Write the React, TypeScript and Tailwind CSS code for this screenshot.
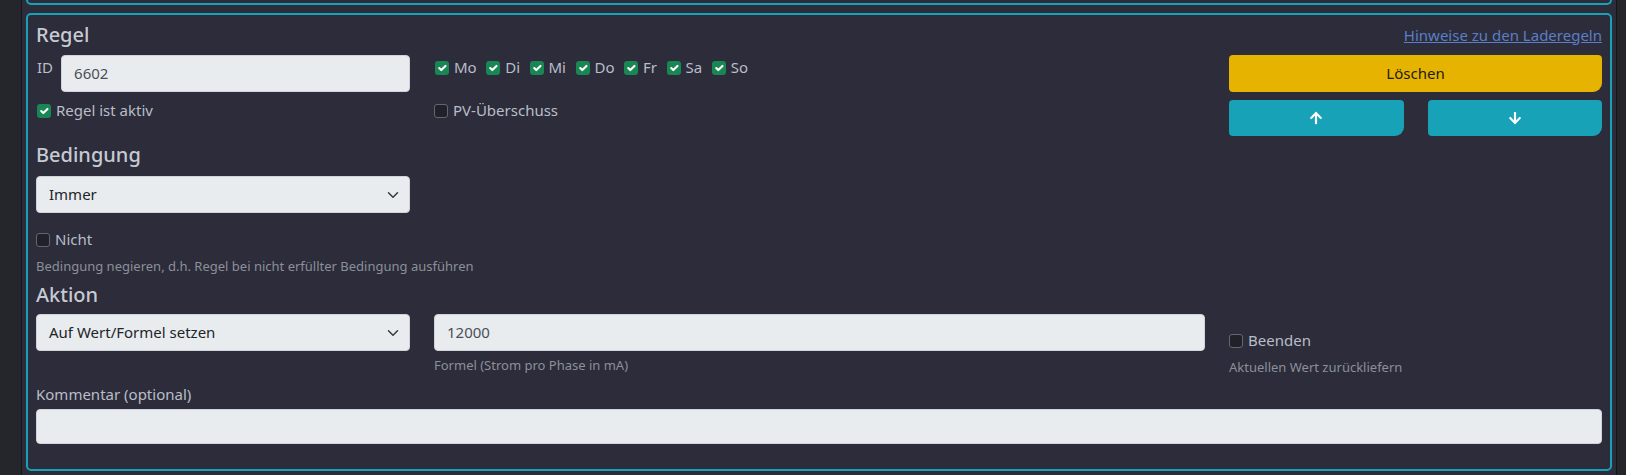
import React from "react";
import { FaArrowUp, FaArrowDown } from "react-icons/fa";

function Check({ checked }: { checked: boolean }) {
  return checked ? (
    <span className="inline-flex h-[14px] w-[14px] shrink-0 items-center justify-center rounded-[3px] bg-[#198754]">
      <svg viewBox="0 0 20 20" className="h-[14px] w-[14px]">
        <path d="m6 10 3 3 6-6" fill="none" stroke="#fff" strokeWidth="3" strokeLinecap="round" strokeLinejoin="round" />
      </svg>
    </span>
  ) : (
    <span className="inline-block h-[14px] w-[14px] shrink-0 rounded-[3px] border border-[#62666e] bg-[#212229]" />
  );
}

function CheckLine({ checked, label, className = "" }: { checked: boolean; label: string; className?: string }) {
  return (
    <div className={"flex items-center text-[15px] leading-[21px] text-[#b9bec8] " + className}>
      <Check checked={checked} />
      <span className="ml-[5px]">{label}</span>
    </div>
  );
}

function Chevron() {
  return (
    <svg viewBox="0 0 16 16" className="h-[12px] w-[12px] shrink-0">
      <path d="m2 5 6 6 6-6" fill="none" stroke="#343a40" strokeWidth="2" strokeLinecap="round" strokeLinejoin="round" />
    </svg>
  );
}

function Select({ value }: { value: string }) {
  return (
    <div className="flex h-[37px] items-center justify-between rounded-[4px] border border-[#ced4da] bg-[#e9ecef] pl-[12px] pr-[10px] text-[15px] text-[#212529]">
      <span>{value}</span>
      <Chevron />
    </div>
  );
}

const days = ["Mo", "Di", "Mi", "Do", "Fr", "Sa", "So"];

export default function App() {
  return (
    <div
      className="h-[475px] w-[1626px] overflow-hidden bg-[#25262c]"
      style={{ fontFamily: '"Noto Sans", "Open Sans", sans-serif' }}
    >
      <div className="ml-[21px] h-full w-[1596px] border-x border-[#15161a] bg-[#2c2c3a] px-[4px]">
        {/* previous card bottom */}
        <div className="h-[5px] rounded-b-[5px] border-x-2 border-b-2 border-[#17a2b8]" />

        {/* card */}
        <div className="mt-[8px] rounded-[5px] border-2 border-[#17a2b8] px-[8px] pb-[25px] pt-[8px]">
          <div className="flex items-center justify-between">
            <h5 className="text-[20px] font-medium leading-[24px] text-[#c6cad2]">Regel</h5>
            <a className="text-[15px] leading-[21px] text-[#5a7fc7] underline">Hinweise zu den Laderegeln</a>
          </div>

          {/* row 1 */}
          <div className="mt-[8px] grid grid-cols-[374px_771px_373px] gap-x-[24px]">
            <div className="flex items-start gap-[8px]">
              <span className="pl-px pt-[2px] text-[15px] leading-[21px] text-[#b9bec8]">ID</span>
              <div className="flex h-[37px] flex-1 items-center rounded-[4px] border border-[#ced4da] bg-[#e9ecef] px-[12px] text-[15px] text-[#495057]">
                6602
              </div>
            </div>
            <div className="flex items-start pl-px pt-[2px]">
              {days.map((d) => (
                <CheckLine key={d} checked label={d} className="mr-[9.5px]" />
              ))}
            </div>
            <button className="h-[37px] rounded-[4px] rounded-br-[9px] bg-[#e6b400] text-[15px] text-[#1b1b1b]">
              Löschen
            </button>
          </div>

          {/* row 2 */}
          <div className="mt-[8px] grid grid-cols-[374px_771px_373px] gap-x-[24px]">
            <CheckLine checked label="Regel ist aktiv" className="self-start pl-px" />
            <CheckLine checked={false} label="PV-Überschuss" className="self-start" />
            <div className="grid grid-cols-2 gap-x-[24px]">
              <button className="flex h-[36px] items-center justify-center rounded-[4px] rounded-br-[9px] bg-[#17a2b8] text-white">
                <FaArrowUp size={14} />
              </button>
              <button className="flex h-[36px] items-center justify-center rounded-[4px] rounded-br-[9px] bg-[#17a2b8] text-white">
                <FaArrowDown size={14} />
              </button>
            </div>
          </div>

          {/* Bedingung */}
          <h5 className="mt-[7px] text-[20px] font-medium leading-[24px] text-[#c6cad2]">Bedingung</h5>
          <div className="mt-[9px] w-[374px]">
            <Select value="Immer" />
          </div>
          <CheckLine checked={false} label="Nicht" className="mt-[16px]" />
          <p className="mt-[7px] text-[13px] leading-[18px] text-[#8b9099]">
            Bedingung negieren, d.h. Regel bei nicht erfüllter Bedingung ausführen
          </p>

          {/* Aktion */}
          <h5 className="mt-[8px] text-[20px] font-medium leading-[24px] text-[#c6cad2]">Aktion</h5>
          <div className="mt-[7px] grid grid-cols-[374px_771px_373px] gap-x-[24px]">
            <div>
              <Select value="Auf Wert/Formel setzen" />
            </div>
            <div>
              <div className="flex h-[37px] items-center rounded-[4px] border border-[#ced4da] bg-[#e9ecef] px-[12px] text-[15px] text-[#495057]">
                12000
              </div>
              <p className="mt-[5px] text-[13px] leading-[18px] text-[#8b9099]">Formel (Strom pro Phase in mA)</p>
            </div>
            <div className="pt-[16px]">
              <CheckLine checked={false} label="Beenden" />
              <p className="mt-[7px] text-[13px] leading-[18px] text-[#8b9099]">Aktuellen Wert zurückliefern</p>
            </div>
          </div>

          <div className="mt-[8px] text-[15px] leading-[21px] text-[#b9bec8]">Kommentar (optional)</div>
          <div className="mt-[4px] h-[35px] rounded-[4px] border border-[#ced4da] bg-[#e9ecef]" />
        </div>
      </div>
    </div>
  );
}
